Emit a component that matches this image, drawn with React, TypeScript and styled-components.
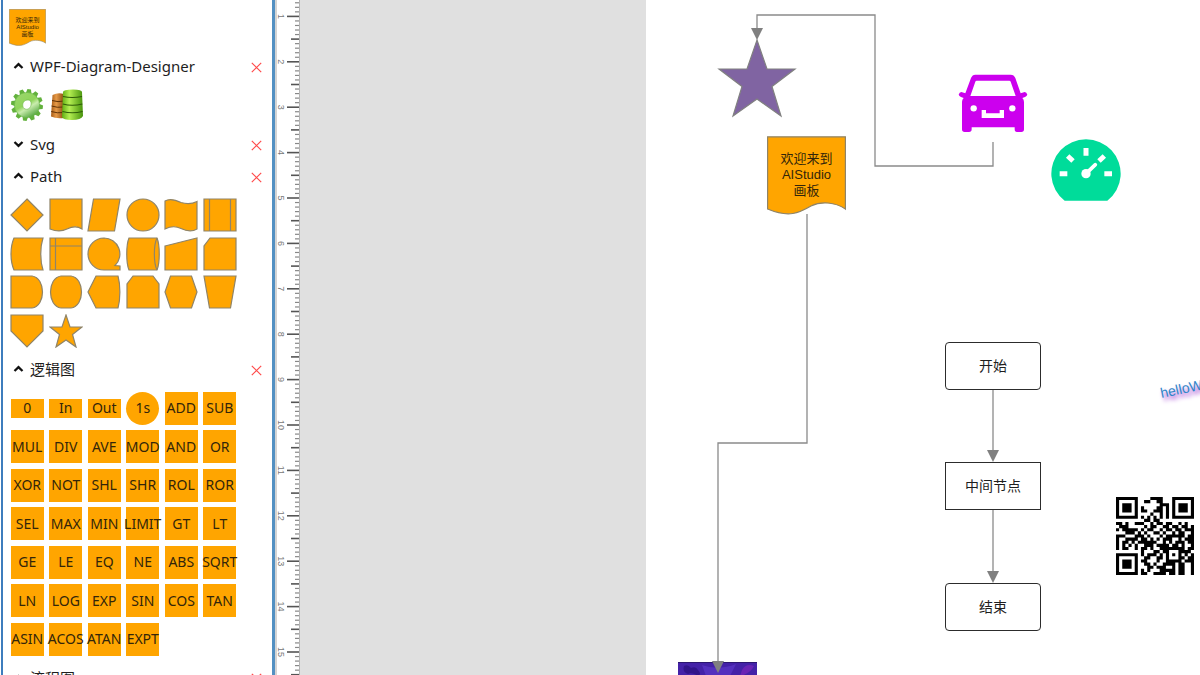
import React, { useEffect, useState } from "react";
import styled, { createGlobalStyle } from "styled-components";

const ORANGE = "#ffa500";
const LINE = "#8a8a8a";

const GlobalStyle = createGlobalStyle`
  *, *::before, *::after { box-sizing: border-box; }
  body {
    margin: 0;
    background: #ffffff;
    color: #1e1e1e;
    font-family: "Noto Sans", "Noto Sans CJK SC", sans-serif;
  }
  button { font: inherit; color: inherit; border: 0; padding: 0; background: none; cursor: pointer; }
`;

const Shell = styled.div`
  display: flex;
  height: 100vh;
  overflow: hidden;
`;

/* ---------- toolbox ---------- */

const Toolbox = styled.aside`
  flex: 0 0 274px;
  margin-left: 1px;
  border-left: 2px solid #3d7dbd;
  border-right: 3px solid #5390c2;
  padding-left: 5px;
  overflow: hidden;
`;

const Favourites = styled.div`
  height: 50px;
  padding: 9px 1px;
`;

const ThumbButton = styled.button`
  position: relative;
  display: block;
  width: 37px;
  height: 37px;
`;

const SectionHeader = styled.header`
  display: flex;
  align-items: center;
  justify-content: space-between;
  height: 32px;
  padding: 0 10px 0 5px;
`;

const SectionTitle = styled.h2`
  margin: 0;
  font-size: 15px;
  font-weight: 400;
  line-height: 20px;
`;

const ToggleButton = styled.button`
  display: flex;
  align-items: center;
  gap: 6px;
`;

const CloseButton = styled.button`
  display: flex;
  padding-top: 2px;
`;

const IconRow = styled.div`
  display: flex;
  align-items: center;
  gap: 2px;
  height: 46px;
`;

const IconButton = styled.button`
  display: flex;
  align-items: center;
  justify-content: center;
  width: 38px;
  height: 38px;
`;

const TileGrid = styled.div`
  display: grid;
  grid-template-columns: repeat(6, 1fr);
  width: 231px;
  padding: 4px 0 3px;
`;

const TileCell = styled.button`
  display: flex;
  align-items: center;
  justify-content: center;
  aspect-ratio: 1;
  min-width: 0;
`;

type TileShape = "square" | "flat" | "round";

const LogicTile = styled.span<{ $shape: TileShape }>`
  display: flex;
  align-items: center;
  justify-content: center;
  width: 33px;
  height: ${(p) => (p.$shape === "flat" ? 19 : 33)}px;
  border-radius: ${(p) => (p.$shape === "round" ? "50%" : "0")};
  background: ${ORANGE};
  color: #33250a;
  font-size: 14px;
  line-height: 20px;
  white-space: nowrap;
`;

/* ---------- ruler and canvas ---------- */

const Ruler = styled.div`
  flex: 0 0 25px;
  overflow: hidden;
  background: #ffffff;
  border-left: 2px solid #d4d4d4;
  border-right: 1px solid #b4b4b4;
`;

const Workspace = styled.main`
  flex: 1;
  min-width: 0;
  padding-left: 346px;
  background: #e0e0e0;
  overflow: hidden;
`;

const Page = styled.div`
  position: relative;
  height: 100%;
  background: #ffffff;
  overflow: hidden;
`;

const Wires = styled.svg`
  position: absolute;
  inset: 0;
  width: 100%;
  height: 100%;
  z-index: 2;
  pointer-events: none;
`;

const Node = styled.div<{ $x: number; $y: number; $w: number; $h: number }>`
  position: absolute;
  left: ${(p) => p.$x}px;
  top: ${(p) => p.$y}px;
  width: ${(p) => p.$w}px;
  height: ${(p) => p.$h}px;
  svg { display: block; }
`;

const FlowNode = styled(Node)<{ $rounded?: boolean }>`
  display: flex;
  align-items: center;
  justify-content: center;
  border: 1px solid #2c2c2c;
  border-radius: ${(p) => (p.$rounded ? 4 : 0)}px;
  background: #ffffff;
  font-family: "Liberation Sans", "Noto Sans CJK SC", sans-serif;
  font-size: 14px;
  line-height: 20px;
`;

const NoteText = styled.span<{ $size: number; $line: number; $top: number }>`
  position: absolute;
  left: 0;
  right: 0;
  top: ${(p) => p.$top}px;
  text-align: center;
  color: #33250a;
  font-family: "Liberation Sans", "Noto Sans CJK SC", sans-serif;
  font-size: ${(p) => p.$size}px;
  line-height: ${(p) => p.$line}px;
  white-space: nowrap;
  span { display: block; }
`;

const TiltedText = styled(Node)`
  transform: rotate(-12deg);
  transform-origin: 0 100%;
  color: #2f86c8;
  font-family: "Liberation Sans", sans-serif;
  font-size: 14px;
  line-height: 16px;
  text-shadow: 2px 4px 4px #a040d0;
`;

/* ---------- drawings ---------- */

const Chevron = ({ open }: { open: boolean }) => (
  <svg width="11" height="8" viewBox="0 0 11 8" aria-hidden="true">
    <path d={open ? "M1.5 6 L5.5 2.2 L9.5 6" : "M1.5 2 L5.5 5.8 L9.5 2"} fill="none" stroke="#111" strokeWidth="2.3" />
  </svg>
);

const Cross = () => (
  <svg width="11" height="11" viewBox="0 0 11 11" aria-hidden="true">
    <path d="M0.8 0.8 L10.2 10.2 M10.2 0.8 L0.8 10.2" stroke="#ff4a4a" strokeWidth="1.2" />
  </svg>
);

const DocumentShape = ({ size }: { size: number }) => (
  <svg width={size} height={size} viewBox="0 0 79 79" aria-hidden="true">
    <path
      d="M.6 .8 H78.4 V73 C68 66 54 65 44 70 C32 77 22 82 .6 73 Z"
      fill={ORANGE}
      stroke="#8f8468"
      strokeWidth="1.2"
    />
  </svg>
);

const gearTeeth = Array.from({ length: 12 }, (_, i) => i * 30);

const Gear = () => (
  <svg width="34" height="34" viewBox="0 0 34 34" aria-hidden="true">
    <defs>
      <linearGradient id="gear" x1="0.2" y1="0" x2="0.8" y2="1">
        <stop offset="0" stopColor="#9ad66c" />
        <stop offset="0.45" stopColor="#8fd45a" />
        <stop offset="0.6" stopColor="#c9ecae" />
        <stop offset="1" stopColor="#3f9a2a" />
      </linearGradient>
    </defs>
    <g fill="#62b13c">
      {gearTeeth.map((a) => (
        <path key={a} d="M14 6 L15.2 1 L18.800 1 L20 6 Z" transform={`rotate(${a + 8} 17 17)`} />
      ))}
    </g>
    <path
      fillRule="evenodd"
      fill="url(#gear)"
      stroke="#6ab648"
      strokeWidth=".6"
      d="M17 4.4 A12.6 12.6 0 1 1 17 29.6 A12.6 12.6 0 1 1 17 4.4 Z M18 12 C14 12 12.400 15 12.800 18 C13.200 22 19 22.500 20.600 18.500 C21.800 15 21 12 18 12 Z"
    />
  </svg>
);

const Databases = () => (
  <svg width="34" height="34" viewBox="0 0 34 34" aria-hidden="true">
    <defs>
      <linearGradient id="dbGreen">
        <stop offset="0" stopColor="#5fae12" />
        <stop offset="0.35" stopColor="#b4ee52" />
        <stop offset="1" stopColor="#47930c" />
      </linearGradient>
      <linearGradient id="dbBrown">
        <stop offset="0" stopColor="#a85a14" />
        <stop offset="0.4" stopColor="#e69a48" />
        <stop offset="1" stopColor="#8a4a10" />
      </linearGradient>
    </defs>
    <path d="M2.500 7 Q8 4 14 6 V30 Q6 31 1 28.500 Z" fill="url(#dbBrown)" />
    <path d="M2 12.500 Q8 14.500 14 13 M1.500 18 Q7 20 14 19 M1.200 23.500 Q7 25.500 14 24.500" fill="none" stroke="#5f3208" strokeWidth="1" />
    <path d="M13 4 Q13 1.500 23 1.500 Q32 1.500 32 4 L33 28 Q31 32 22 32 Q13 32 12 29 Z" fill="url(#dbGreen)" />
    <path d="M13 8.500 Q22 10.500 32 8.500 M12.800 16 Q22 18.500 32.300 16 M12.500 23.500 Q22 26 32.600 23.500" fill="none" stroke="#2f5c08" strokeWidth="1.200" />
  </svg>
);

const shapes: { name: string; d: string; extra?: string }[] = [
  { name: "Decision", d: "M17 1 L33 17 L17 33 L1 17 Z" },
  { name: "Document", d: "M1 1 H33 V31 C27 27 22 29 18 31 C12 34 6 33 1 31 Z" },
  { name: "Data", d: "M6.500 1 H33 L27.500 33 H1 Z" },
  { name: "Start", d: "M17 1 A16 16 0 1 1 17 33 A16 16 0 1 1 17 1 Z" },
  { name: "Tape", d: "M1 3 C6 0 12 2 17 4.500 C22 6 28 6 33 3.500 V31 C28 34 22 33 17 30.500 C12 28 7 28 1 31 Z" },
  { name: "Predefined", d: "M1 1 H33 V33 H1 Z", extra: "M6.500 1 V33 M27.500 1 V33" },
  { name: "Stored data", d: "M4 1 H33 C30 10 30 24 33 33 H4 C0 24 0 10 4 1 Z" },
  { name: "Internal storage", d: "M1 1 H33 V33 H1 Z", extra: "M6.500 1 V33 M1 9 H33" },
  { name: "Sequential data", d: "M17 1 A16 16 0 0 1 28 28.500 L33 29 V33 H17 A16 16 0 1 1 17 1 Z" },
  { name: "Direct data", d: "M3 1 H31 C34 8 34 26 31 33 H3 C0 26 0 8 3 1 Z", extra: "M31 1 C27.500 8 27.500 26 31 33" },
  { name: "Manual input", d: "M1 9 L33 1 V33 H1 Z" },
  { name: "Card", d: "M7 1 H33 V33 H1 V9 Z" },
  { name: "Delay", d: "M1 1 H22 C36 3 36 31 22 33 H1 Z" },
  { name: "Terminator", d: "M12 1 H22 C36 3 36 31 22 33 H12 C-2 31 -2 3 12 1 Z" },
  { name: "Display", d: "M9 1 H31 C33.500 10 33.500 24 31 33 H9 L1 17 Z" },
  { name: "Loop limit", d: "M7 1 H27 L33 9 V33 H1 V9 Z" },
  { name: "Preparation", d: "M6.500 1 H27.500 L33 17 L27.500 33 H6.500 L1 17 Z" },
  { name: "Manual operation", d: "M1 1 H33 L27.500 33 H6.500 Z" },
  { name: "Off page", d: "M1 1 H33 V17 L17 33 L1 17 Z" },
  { name: "Star", d: "M17 1 L21 13 H33 L23.500 20.500 L27 33 L17 26 L7 33 L10.500 20.500 L1 13 H13 Z" },
];

const logic = (
  "0 In Out 1s ADD SUB MUL DIV AVE MOD AND OR XOR NOT SHL SHR ROL ROR " +
  "SEL MAX MIN LIMIT GT LT GE LE EQ NE ABS SQRT LN LOG EXP SIN COS TAN ASIN ACOS ATAN EXPT"
).split(" ");

const logicShape = (i: number): TileShape => (i < 3 ? "flat" : i === 3 ? "round" : "square");

const UNIT = 45.4;
const ORIGIN = -29;

const useWindowHeight = () => {
  const [height, setHeight] = useState(() => window.innerHeight);
  useEffect(() => {
    const update = () => setHeight(window.innerHeight);
    window.addEventListener("resize", update);
    return () => window.removeEventListener("resize", update);
  }, []);
  return height;
};

const RulerScale = () => {
  const height = useWindowHeight();
  const units = Math.floor((height - ORIGIN - 8) / UNIT);
  const ticks = Array.from({ length: (units + 1) * 10 }, (_, i) => i);
  const labels = Array.from({ length: units }, (_, i) => i + 1);
  return (
    <svg width="22" height="100%" aria-hidden="true">
      {ticks.map((i) => {
        const y = ORIGIN + (i * UNIT) / 10;
        const major = i % 10 === 0;
        const mid = i % 5 === 0;
        return (
          <line
            key={i}
            x1={major ? 10 : mid ? 14 : 18}
            x2={22}
            y1={y}
            y2={y}
            stroke={mid ? "#555" : "#888"}
            strokeWidth={mid ? 1.6 : 1.2}
          />
        );
      })}
      {labels.map((n) => (
        <text
          key={n}
          transform={`translate(1 ${ORIGIN + n * UNIT}) rotate(90)`}
          textAnchor="middle"
          fontFamily="Liberation Sans, sans-serif"
          fontSize="9"
          fill="#777"
        >
          {n}
        </text>
      ))}
    </svg>
  );
};

const qrRows = [
  "1111111000011110001111111",
  "1000001001100110001000001",
  "1011101000000011101011101",
  "1011101010000110101011101",
  "1011101011001110101011101",
  "1000001000010010101000001",
  "1111111010101010101111111",
  "0000000001101100000000000",
  "1101001110010110110010100",
  "0111000001011001101101101",
  "1011111010110010110110111",
  "0001110101001101001011001",
  "1110001110100010111111011",
  "1001111011010101110010111",
  "1011010111111001010111011",
  "1010101001110111101101001",
  "1011001011010011111111011",
  "0000000010001101100011110",
  "1111111010111010101010101",
  "1000001001100110100011011",
  "1011101011000100111110111",
  "1011101001101001111011001",
  "1011101000110111001011001",
  "1000001010100011111011001",
  "1111111011001111011011001",
];

const qrPath = qrRows
  .map((row, y) => [...row.matchAll(/1+/g)].map((m) => `M${m.index} ${y}h${m[0].length}v1h-${m[0].length}z`).join(""))
  .join("");

const QrCode = () => (
  <svg width="78" height="78" viewBox="0 0 25 25" role="img" aria-label="QR code">
    <path fill="#000" d={qrPath} />
  </svg>
);

const Car = () => (
  <svg width="70" height="58" viewBox="54 42 210 174" role="img" aria-label="Car">
    <path
      fill="#cc00ee"
      fillRule="evenodd"
      d="M106 44 H212 Q222 44 226 54 L242 100 L254 96 Q260 96 262 104 Q261 109 247 114 Q252 118 252 126 V208 Q252 216 244 216 H231 Q224 216 224 208 V202 H95 V208 Q95 216 87 216 H74 Q66 216 66 208 V126 Q66 118 71 114 Q57 109 56 104 Q58 96 64 96 L76 100 L93 54 Q97 44 106 44 Z M110 62 Q107 62 106 65 L91 108 H227 L212 65 Q211 62 208 62 Z"
    />
    <g fill="#fff">
      <circle cx="101" cy="145" r="9.500" />
      <circle cx="217" cy="145" r="9.500" />
      <path d="M125 150 H138 V160 H179 V150 H192 V174 H125 Z" />
    </g>
  </svg>
);

const Gauge = () => (
  <svg width="70" height="62" viewBox="333 238 210 186" role="img" aria-label="Gauge">
    <path fill="#00dc9a" d="M374 423 A104 103 0 1 1 502 423 Z" />
    <g stroke="#fff" strokeWidth="15">
      <path d="M438 265 V288 M359 342 H382 M493 342 H516 M383 289 L399 304 M493 289 L477 304" />
      <path d="M438 342 L466 315" strokeWidth="11" strokeLinecap="round" />
    </g>
    <circle cx="438" cy="342" r="14" fill="#fff" />
  </svg>
);

const Star = () => (
  <svg width="80" height="80" viewBox="0 0 80 80" role="img" aria-label="Star">
    <path
      d="M40 2 L50 31 H78 L55 48.500 L64 78 L40 61 L16 78 L25 48.500 L2 31 H30 Z"
      fill="#8064a2"
      stroke="#808080"
      strokeWidth="1.200"
    />
  </svg>
);

const Banner = () => (
  <svg width="79" height="79" viewBox="0 0 79 79" role="img" aria-label="Picture">
    <rect width="79" height="79" fill="#4422a8" />
    <path d="M6 4 Q10 2 13 6 Q18 4 20 8 Q24 12 20 14 Q14 10 10 12 Q4 10 6 4 Z" fill="#31148a" />
    <path d="M64 8 Q68 1 76 4 Q72 12 62 14 Z" fill="#6a24b4" />
    <path d="M24 3 Q40 9 58 2 L52 14 H28 Z" fill="#5430be" />
    <path d="M0 0 H79" stroke="#2b1670" strokeWidth="2" />
  </svg>
);

const Connector = ({ d, tip }: { d: string; tip: [number, number] }) => (
  <g>
    <path d={d} fill="none" stroke={LINE} strokeWidth="1.300" />
    <path d={`M${tip[0]} ${tip[1]} l-6 -12 h12 z`} fill="#808080" />
  </g>
);

const Section = ({ title, open, children }: { title: string; open: boolean; children?: React.ReactNode }) => (
  <section>
    <SectionHeader>
      <SectionTitle>
        <ToggleButton aria-expanded={open}>
          <Chevron open={open} />
          {title}
        </ToggleButton>
      </SectionTitle>
      <CloseButton aria-label={`Remove ${title}`}>
        <Cross />
      </CloseButton>
    </SectionHeader>
    {children}
  </section>
);

const Welcome = ({ size, line, top }: { size: number; line: number; top: number }) => (
  <NoteText $size={size} $line={line} $top={top}>
    <span>欢迎来到</span>
    <span>AIStudio</span>
    <span>画板</span>
  </NoteText>
);

export default function App() {
  return (
    <>
      <GlobalStyle />
      <Shell>
        <Toolbox>
          <Favourites>
            <ThumbButton>
              <DocumentShape size={37} />
              <Welcome size={6} line={7} top={8} />
            </ThumbButton>
          </Favourites>
          <Section title="WPF-Diagram-Designer" open>
            <IconRow>
              <IconButton aria-label="Settings">
                <Gear />
              </IconButton>
              <IconButton aria-label="Databases">
                <Databases />
              </IconButton>
            </IconRow>
          </Section>
          <Section title="Svg" open={false} />
          <Section title="Path" open>
            <TileGrid>
              {shapes.map((s) => (
                <TileCell key={s.name} aria-label={s.name}>
                  <svg width="34" height="34" viewBox="0 0 34 34" stroke="#8f8468" strokeWidth="1.200" aria-hidden="true">
                    <path d={s.d} fill={ORANGE} />
                    {s.extra && <path d={s.extra} fill="none" />}
                  </svg>
                </TileCell>
              ))}
            </TileGrid>
          </Section>
          <Section title="逻辑图" open>
            <TileGrid>
              {logic.map((label, i) => (
                <TileCell key={label}>
                  <LogicTile $shape={logicShape(i)}>{label}</LogicTile>
                </TileCell>
              ))}
            </TileGrid>
          </Section>
          <Section title="流程图" open />
        </Toolbox>

        <Ruler>
          <RulerScale />
        </Ruler>

        <Workspace>
          <Page>
            <Node $x={71} $y={38} $w={80} $h={80}>
              <Star />
            </Node>
            <Node $x={121} $y={136} $w={79} $h={79}>
              <DocumentShape size={79} />
              <Welcome size={13} line={16} top={15} />
            </Node>
            <Node $x={312} $y={74} $w={70} $h={58}>
              <Car />
            </Node>
            <Node $x={405} $y={139} $w={70} $h={62}>
              <Gauge />
            </Node>
            <FlowNode $x={299} $y={342} $w={96} $h={48} $rounded>
              开始
            </FlowNode>
            <FlowNode $x={299} $y={462} $w={96} $h={48}>
              中间节点
            </FlowNode>
            <FlowNode $x={299} $y={583} $w={96} $h={48} $rounded>
              结束
            </FlowNode>
            <TiltedText $x={516} $y={385} $w={80} $h={16}>
              helloWorld
            </TiltedText>
            <Node $x={470} $y={497} $w={78} $h={78}>
              <QrCode />
            </Node>
            <Node $x={32} $y={662} $w={79} $h={79}>
              <Banner />
            </Node>
            <Wires aria-hidden="true">
              <Connector d="M347 142 V166 H229 V15 H111 V30" tip={[111, 40]} />
              <Connector d="M161 214 V443 H72 V664" tip={[72, 673]} />
              <Connector d="M347 390 V452" tip={[347, 462]} />
              <Connector d="M347 510 V573" tip={[347, 583]} />
            </Wires>
          </Page>
        </Workspace>
      </Shell>
    </>
  );
}
